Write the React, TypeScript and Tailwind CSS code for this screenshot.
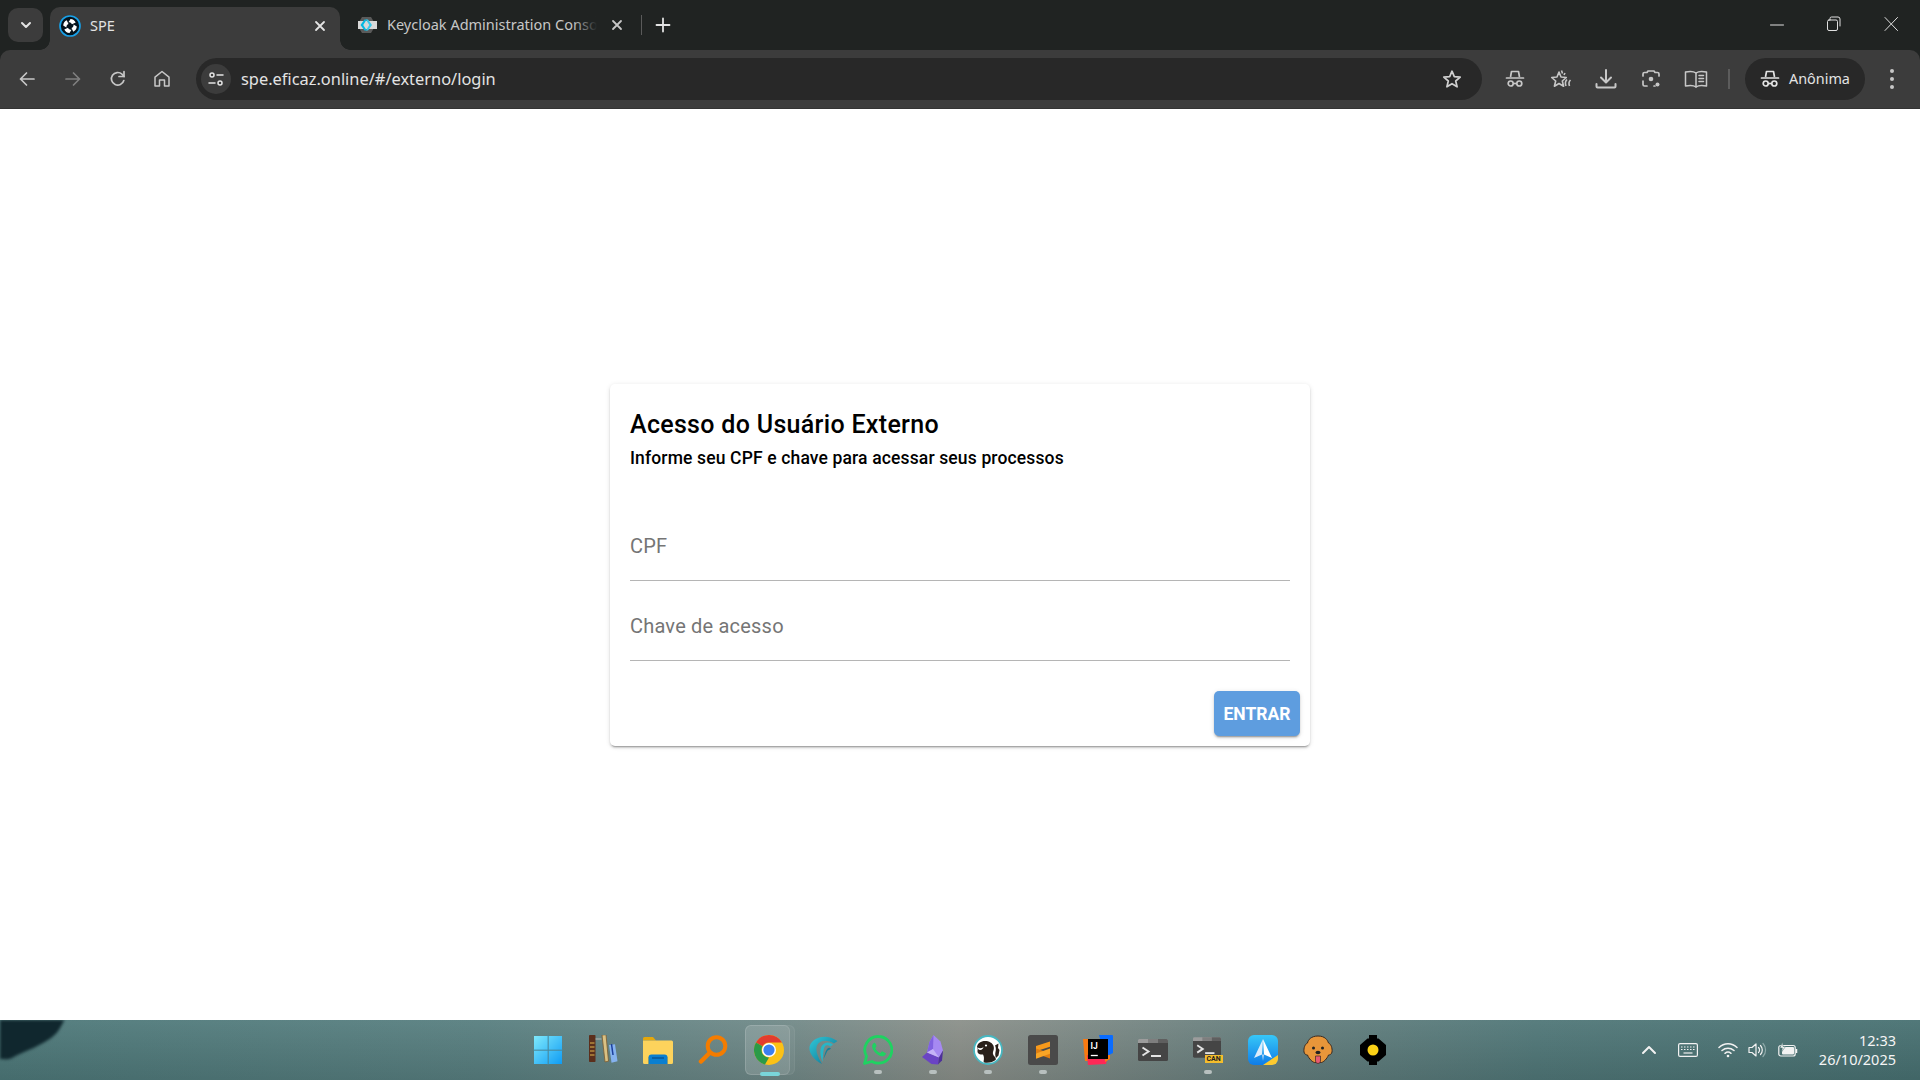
import React from "react";

const ui = { fontFamily: '"Noto Sans", "Open Sans", sans-serif' };
const rb = { fontFamily: 'Roboto, "Liberation Sans", sans-serif' };

function Line({ children, w = 20, h = 20, sw = 1.7, c = "#c7c7c7" }: { children: React.ReactNode; w?: number; h?: number; sw?: number; c?: string }) {
  return (
    <svg width={w} height={h} viewBox={`0 0 ${w} ${h}`} fill="none" stroke={c} strokeWidth={sw} strokeLinecap="round" strokeLinejoin="round">
      {children}
    </svg>
  );
}

function Spe() {
  return (
    <svg width="22" height="22" viewBox="0 0 22 22">
      <circle cx="11" cy="11" r="10" fill="#05131d" stroke="#18a0e8" strokeWidth="1.700" />
      <path d="M11.500 4c2.500.2 4.300 1.500 5.200 3.500l-3.700 1.800C12.300 7.800 11.300 7.200 9.500 7.200Z" fill="#fff" />
      <path d="M17.800 11.500c-.2 2.500-1.500 4.300-3.500 5.200L12.500 13c1.500-.7 2.100-1.700 2.100-3.500Z" fill="#fff" />
      <path d="M10.500 18c-2.500-.2-4.300-1.500-5.200-3.500L9 12.700c.7 1.500 1.700 2.100 3.500 2.100Z" fill="#fff" />
      <path d="M4.200 10.500c.2-2.500 1.500-4.300 3.500-5.200L9.500 9C8 9.700 7.400 10.700 7.400 12.500Z" fill="#fff" />
    </svg>
  );
}

function KeycloakFav() {
  return (
    <svg width="20" height="18" viewBox="0 0 20 18">
      <path d="M5 1h9l3 5H2Z" fill="#5a5a5a" />
      <path d="M2 12h15l-3 5H5Z" fill="#5a5a5a" />
      <rect x="1" y="5" width="19" height="8" fill="#d8d8d8" />
      <path d="M7.500 3.500 3.500 9l4 5.500h2.200L6.200 9l3.500-5.500Z" fill="#00b8e3" />
      <path d="M11 3.500 15 9l-4 5.500H8.800L12.300 9 8.800 3.500Z" fill="#39c8ea" />
    </svg>
  );
}

function Hat({ c = "#c7c7c7" }: { c?: string }) {
  return (
    <svg width="20" height="20" viewBox="0 0 20 20" fill="none" stroke={c} strokeWidth="1.700">
      <path d="M5.500 8 6.500 2.500h7L14.500 8" strokeLinejoin="round" />
      <path d="M1.500 9h17" strokeLinecap="round" />
      <circle cx="5.700" cy="14.500" r="2.500" />
      <circle cx="14.300" cy="14.500" r="2.500" />
      <path d="M8.200 14.500h3.600" />
    </svg>
  );
}

function Star({ size = 20 }: { size?: number }) {
  return (
    <svg width={size} height={size} viewBox="0 0 20 20" fill="none" stroke="#d0d0d0" strokeWidth="1.700" strokeLinejoin="round">
      <path d="M10 2.200 12.300 7.600 18.200 8.100 13.700 12 15.100 17.800 10 14.700 4.900 17.800 6.300 12 1.800 8.100 7.700 7.600Z" />
    </svg>
  );
}

function Chrome() {
  return (
    <svg width="30" height="30" viewBox="0 0 30 30">
      <circle cx="15" cy="15" r="15" fill="#fbc116" />
      <path d="M15 0A15 15 0 0 1 28 7.500H15A7.500 7.500 0 0 0 8.500 11.300L2 7.500A15 15 0 0 1 15 0Z" fill="#e33b2e" />
      <path d="M2 7.500 8.500 11.300A7.500 7.500 0 0 0 15 22.500L11 29.500A15 15 0 0 1 2 7.500Z" fill="#2b9a47" />
      <circle cx="15" cy="15" r="7" fill="#fff" />
      <circle cx="15" cy="15" r="5.600" fill="#3b7ff0" />
    </svg>
  );
}

function WinLogo() {
  return (
    <svg width="30" height="30" viewBox="0 0 30 30">
      <defs>
        <linearGradient id="wl" x1="0" y1="0" x2="1" y2="1">
          <stop offset="0" stopColor="#7fe9fb" />
          <stop offset="1" stopColor="#0f9cf4" />
        </linearGradient>
      </defs>
      <path d="M1 1h14v14H1zM15.500 1H29v14H15.500zM1 15.500h14V29H1zM15.500 15.500H29V29H15.500z" fill="url(#wl)" />
      <path d="M0 15h30M15 0v30" stroke="#3f8ea8" strokeWidth=".8" />
    </svg>
  );
}

function Books() {
  return (
    <svg width="30" height="30" viewBox="0 0 30 30">
      <rect x="1" y="0" width="6.500" height="27" rx=".8" fill="#5b2f1c" />
      <path d="M2 8h4.500M2 12h4.500M2 16h4.500M2 20h4.500" stroke="#b58a3c" strokeWidth="1.300" />
      <path d="M7.500 4h6" stroke="#b8b8b0" strokeWidth="1" />
      <path d="M14 0l4-.3 2.500 26.500-3.500.7Z" fill="#d9c184" stroke="#7a5b30" strokeWidth=".8" />
      <path d="M21 10l6-.8 2.500 17-6 1.500Z" fill="#85b2ef" />
      <path d="M23.500 9 25 20" stroke="#1c3f9c" strokeWidth="1.500" />
    </svg>
  );
}

function Folder() {
  return (
    <svg width="30" height="28" viewBox="0 0 30 28">
      <path d="M0 2.500A1.500 1.500 0 0 1 1.500 1h8.500l3 3.500H0Z" fill="#e3a70c" />
      <path d="M0 4.500h28.500A1.500 1.500 0 0 1 30 6v20.500A1.500 1.500 0 0 1 28.500 28h-27A1.500 1.500 0 0 1 0 26.500Z" fill="#fdd35c" />
      <path d="M5 21h20v7H5z" fill="#f7b92b" />
      <path d="M5.500 21.500A3 3 0 0 1 8.500 18.500h13a3 3 0 0 1 3 3V28h-19Z" fill="#0b7fd0" />
      <path d="M9 22h12" stroke="#0a4f8f" strokeWidth="1.300" />
    </svg>
  );
}

function Lens() {
  return (
    <svg width="30" height="30" viewBox="0 0 30 30" fill="none">
      <circle cx="18.500" cy="11" r="8.800" stroke="#f47c00" strokeWidth="4" />
      <path d="M11.500 18 3 26.500" stroke="#f47c00" strokeWidth="4.500" strokeLinecap="round" />
    </svg>
  );
}

function Edgeish() {
  return (
    <svg width="30" height="30" viewBox="0 0 30 30" fill="none" strokeLinecap="round">
      <defs>
        <linearGradient id="eg" x1="0" y1="0" x2="1" y2="1">
          <stop offset="0" stopColor="#30c8d8" />
          <stop offset="1" stopColor="#0e6f8e" />
        </linearGradient>
      </defs>
      <path d="M14 29C4 24 -1 15 2.500 9 7 1.500 19 -1.500 29.500 6L26 8.500C18 3.500 11 6 9 10.500 7 16 10 22 14 29Z" fill="url(#eg)" />
      <path d="M14.500 27C12 20 11.500 14 14 10.500 17 6.800 21.500 6.500 25 9.500L22.500 11.500C20 9.800 18 10 16.800 11.800 15.200 14.300 15.300 20 14.500 27Z" fill="#27b6c8" />
      <path d="M15.500 24C17 18 18 15 19.500 13.500 20.800 12.300 22 12.600 23 13.500L21 15C20 14.800 19.200 16 17.500 20Z" fill="#167f99" />
    </svg>
  );
}

function Whats() {
  return (
    <svg width="30" height="30" viewBox="0 0 30 30" fill="none">
      <path d="M15.500 1.500A13.300 13.300 0 0 1 15.500 28.200c-2.400 0-4.600-.6-6.600-1.700L1.500 28.500l2-7.200A13.300 13.300 0 0 1 15.500 1.500Z" stroke="#1fd261" strokeWidth="2.800" strokeLinejoin="round" />
      <path d="M10.800 8c-1.300 1-2 2.500-1.500 4.500 1 3.800 5 7.800 9 8.700 2 .4 3.500-.3 4.400-1.700.4-.7.300-1.300-.3-1.600l-2.700-1.300c-.6-.3-1-.2-1.400.3l-.9 1c-2.400-.8-4.300-2.600-5.200-5l.9-1c.4-.4.500-.9.300-1.300L12.300 8.200c-.3-.7-.9-.7-1.500-.2Z" fill="#1fd261" />
    </svg>
  );
}

function Obsidian() {
  return (
    <svg width="22" height="30" viewBox="0 0 22 30">
      <path d="M11.500 0 18.500 6.500 21 15.500 17 22.500 5 17.500 7.500 7Z" fill="#a689f2" />
      <path d="M11.500 0 7.500 7 5 17.500 11 14Z" fill="#8061e0" />
      <path d="M5 17.500 0 22l9.500 7 6.500.5 1-7Z" fill="#6a44c4" />
      <path d="M17 22.500 21 15.500 20 25.500 16 29.500Z" fill="#4e2f9c" />
      <path d="M11 14 5 17.500 17 22.500Z" fill="#c5b3f7" />
    </svg>
  );
}

function Beaver() {
  return (
    <svg width="30" height="30" viewBox="0 0 30 30">
      <circle cx="15" cy="15" r="14" fill="#fff" stroke="#47b7c1" strokeWidth="1.800" />
      <path d="M4 11.500C4.500 9 6.500 7.300 9 6.500c2.800-.8 6-.5 8.500 1 1.800 1 3 2.500 3.300 4.500.3 2-.3 3.500-.8 5-.4 1.500.2 3 1.500 4.500 1 1 1.500 2 1.300 3.300-2.500 2-6 3.300-10 3 -1-.1-1.800-.5-2.300-1.300.8-2.500.6-5-.5-7-2 .2-4-.2-5-1.500-.8-1-.5-2.500-.3-4-.2-.7-.4-1.300-.7-2.500Z" fill="#2a201b" />
      <path d="M4.500 12.500c2 1 4 .8 6-.3-.4 1.500-1.500 2.500-3.200 2.800-1.300.2-2.300-.8-2.800-2.500Z" fill="#fff" />
      <circle cx="13" cy="10.500" r="1.100" fill="#fff" />
      <path d="M22 10.500l3.500-2-.5 4.500 1.500 2-1 5.500-2.500 2.500c-.8-2-1-4-.5-6 .5-2 .6-4.500-.5-6.500Z" fill="#2a201b" />
    </svg>
  );
}

function Sublime() {
  return (
    <svg width="30" height="30" viewBox="0 0 30 30">
      <rect width="30" height="30" rx="2.500" fill="#4a4a4a" />
      <path d="M22 6.500 8 11v5.200L22 11.700Z" fill="#f79a1c" />
      <path d="M8 18.500 22 23.500v-5.200L8 13.500Z" fill="#e07f12" />
      <path d="M22 13.500 8 18.500v5.200l14-5Z" fill="#f9a526" />
    </svg>
  );
}

function Idea() {
  return (
    <svg width="30" height="30" viewBox="0 0 30 30">
      <path d="M0 4h10v22H2Z" fill="#f97a12" />
      <path d="M16 0h13a1 1 0 0 1 1 1v17l-8 4Z" fill="#0a6cff" />
      <path d="M4 20 24 25l-1 4L5 30Z" fill="#fe2857" />
      <path d="M22 20h5v4l-5 3Z" fill="#f97a12" />
      <rect x="5" y="4" width="20" height="20" fill="#000" />
      <path d="M7.800 20.500h7" stroke="#fff" strokeWidth="1.300" />
      <text x="7.500" y="14" fill="#fff" fontSize="8.500" fontFamily="Roboto, sans-serif" fontWeight="700">IJ</text>
    </svg>
  );
}

function Term({ w = 30, h = 22 }: { w?: number; h?: number }) {
  return (
    <svg width={w} height={h} viewBox="0 0 30 22">
      <path d="M1.500 0H28.500A1.500 1.500 0 0 1 30 1.500V4H0V1.500A1.500 1.500 0 0 1 1.500 0Z" fill="#9c9c9c" />
      <path d="M10 0h10v4H10z" fill="#7e7e7e" />
      <path d="M20 0h8.500A1.500 1.500 0 0 1 30 1.500V4H20Z" fill="#5f5f5f" />
      <path d="M0 4H30V20.500A1.500 1.500 0 0 1 28.500 22H1.500A1.500 1.500 0 0 1 0 20.500Z" fill="#454545" />
      <path d="M4.500 8.500 10.500 12.500 4.500 16.500" fill="none" stroke="#e3e3e3" strokeWidth="2" />
      <path d="M13 17h10" stroke="#e3e3e3" strokeWidth="2" />
    </svg>
  );
}

function Spark() {
  return (
    <svg width="30" height="30" viewBox="0 0 30 30">
      <defs>
        <linearGradient id="sp" x1="0" y1="0" x2="0" y2="1">
          <stop offset="0" stopColor="#37c7f7" />
          <stop offset="1" stopColor="#0f7ce8" />
        </linearGradient>
      </defs>
      <rect width="30" height="30" rx="6" fill="url(#sp)" />
      <path d="M30 20v4a6 6 0 0 1-6 6h-9Z" fill="#fdc92e" />
      <path d="M15 4 24 23 16 19.500Z" fill="#fff" />
      <path d="M15 4 6 23 14 19.500Z" fill="#dcecfb" />
      <path d="M14 19.500 15 26 16 19.500Z" fill="#b5d6f7" />
    </svg>
  );
}

function Dog() {
  return (
    <svg width="30" height="30" viewBox="0 0 30 30">
      <path d="M15 1C8 1 5 5 4.500 8 2 9 .5 13 1 17c.3 2 2 3 3.500 3 1.500 4 5 7 7 7.500h7c2-.5 5.500-3.500 7-7.500 1.500 0 3.200-1 3.500-3 .5-4-1-8-3.500-9C24.500 5 22 1 15 1Z" fill="#e8963a" stroke="#3a2a20" strokeWidth="1" />
      <circle cx="10.500" cy="13" r="1.500" fill="#222" />
      <circle cx="19.500" cy="13" r="1.500" fill="#222" />
      <ellipse cx="15" cy="17.500" rx="2.500" ry="1.800" fill="#222" />
      <path d="M12.500 21h5v5a2.500 2.500 0 0 1-5 0Z" fill="#e85a72" stroke="#3a2a20" strokeWidth=".7" />
    </svg>
  );
}

function Bolt() {
  return (
    <svg width="26" height="30" viewBox="0 0 26 30">
      <path d="M9 0h8v3.500h1.500L26 10v10l-7.500 6.500H17V30H9v-3.500H7.500L0 20V10l7.500-6.500H9Z" fill="#000" />
      <circle cx="13" cy="15" r="5.500" fill="#fcd116" />
    </svg>
  );
}

const dot = "bg-[#b8c0bf]";

const apps: { key: string; node: React.ReactNode; mark?: boolean }[] = [
  { key: "win", node: <WinLogo /> },
  { key: "books", node: <Books /> },
  { key: "folder", node: <Folder /> },
  { key: "search", node: <Lens /> },
  { key: "chrome", node: <Chrome /> },
  { key: "edge", node: <Edgeish /> },
  { key: "whats", node: <Whats />, mark: true },
  { key: "obs", node: <Obsidian />, mark: true },
  { key: "beaver", node: <Beaver />, mark: true },
  { key: "subl", node: <Sublime />, mark: true },
  { key: "idea", node: <Idea /> },
  { key: "term", node: <Term /> },
  {
    key: "can",
    node: (
      <div className="relative w-[30px] h-[26px]">
        <Term w={28} h={21} />
        <span className="absolute right-0 bottom-0 w-[18px] h-[8px] bg-[#f5bd2c] text-[7px] leading-[8px] text-center font-bold text-[#222]" style={rb}>CAN</span>
      </div>
    ),
    mark: true,
  },
  { key: "spark", node: <Spark /> },
  { key: "dog", node: <Dog /> },
  { key: "bolt", node: <Bolt /> },
];

export default function App() {
  return (
    <div className="w-[1920px] h-[1080px] flex flex-col bg-white overflow-hidden" style={ui}>
      {/* tab strip */}
      <div className="h-[50px] shrink-0 flex bg-[#202322] pl-2 text-[#e3e3e3]">
        <div className="mt-2 w-[35px] h-[34px] rounded-[10px] bg-[#3c3c3c] flex items-center justify-center">
          <Line w={12} h={12} sw={2} c="#e3e3e3"><path d="M2 4l4 4 4-4" /></Line>
        </div>
        <div className="relative mt-[7px] ml-[7px] w-[290px] h-[43px] rounded-t-[10px] bg-[#3c3c3c] flex items-center pl-[9px] pr-[14px] pb-[6px]">
          <span className="absolute -left-[10px] bottom-0 w-[10px] h-[10px] bg-[radial-gradient(circle_at_0_0,transparent_9.5px,#3c3c3c_10px)]" />
          <span className="absolute -right-[10px] bottom-0 w-[10px] h-[10px] bg-[radial-gradient(circle_at_100%_0,transparent_9.5px,#3c3c3c_10px)]" />
          <Spe />
          <span className="ml-[9px] text-[14.500px] flex-1">SPE</span>
          <Line w={12} h={12} sw={1.800} c="#e3e3e3"><path d="M2 2l8 8M10 2l-8 8" /></Line>
        </div>
        <div className="mt-[7px] h-[36px] w-[290px] flex items-center pl-[17px] pr-[7px]">
          <KeycloakFav />
          <span className="relative ml-[10px] w-[210px] overflow-hidden whitespace-nowrap text-[14.500px] text-[#c7c7c7]">
            Keycloak Administration Console
            <span className="absolute right-0 top-0 h-full w-[24px] bg-gradient-to-r from-transparent to-[#202322]" />
          </span>
          <span className="ml-auto"><Line w={12} h={12} sw={1.800} c="#c7c7c7"><path d="M2 2l8 8M10 2l-8 8" /></Line></span>
        </div>
        <div className="mt-[15px] ml-[11px] w-px h-[20px] bg-[#5a5a5a]" />
        <div className="mt-[17px] ml-[13px]">
          <Line w={16} h={16} sw={1.800} c="#e3e3e3"><path d="M8 1.500v13M1.500 8h13" /></Line>
        </div>
        <div className="ml-auto flex items-start pt-[15px]">
          <div className="w-[56px] flex justify-center pt-[1px]">
            <Line w={14} h={18} sw={1} c="#e0e0e0"><path d="M.5 9h13" /></Line>
          </div>
          <div className="w-[57px] flex justify-center">
            <Line w={16} h={18} sw={1} c="#e0e0e0">
              <path d="M4 5V3.500A1.500 1.500 0 0 1 5.500 2H12a2 2 0 0 1 2 2v7" />
              <rect x="1.500" y="5" width="10" height="10.500" rx="1.500" />
            </Line>
          </div>
          <div className="w-[58px] flex justify-center">
            <Line w={16} h={18} sw={1} c="#e0e0e0"><path d="M2 2.500l12.500 13M14.500 2.500 2 15.500" /></Line>
          </div>
        </div>
      </div>

      {/* toolbar */}
      <div className="h-[59px] shrink-0 bg-[#202322]">
        <div className="h-full rounded-t-[10px] bg-[#3c3c3c] border-b border-[#333333] flex items-center text-[#c7c7c7]">
          <div className="w-[196px] shrink-0 flex items-center pl-[17px]">
            <div className="w-[46px]">
              <Line w={20} h={20} sw={1.700} c="#c7c7c7"><path d="M17 10H3.500M9.500 4l-6 6 6 6" /></Line>
            </div>
            <div className="w-[45px]">
              <Line w={20} h={20} sw={1.700} c="#7f7f7f"><path d="M3 10h13.500M10.500 4l6 6-6 6" /></Line>
            </div>
            <div className="w-[44px]">
              <Line w={20} h={20} sw={1.700} c="#c7c7c7">
                <path d="M15.800 11.500A6.300 6.300 0 1 1 14 5.200L16 7.500" />
                <path d="M16 2.500v5h-5" />
              </Line>
            </div>
            <div>
              <Line w={20} h={20} sw={1.500} c="#c7c7c7">
                <path d="M3 17V8.200L10 2.500l7 5.700V17h-4.500v-6h-5v6Z" />
              </Line>
            </div>
          </div>
          <div className="w-[1286px] h-[42px] rounded-full bg-[#282828] flex items-center pl-[5px] pr-[20px]">
            <div className="w-[30px] h-[30px] rounded-full bg-[#3c3c3c] flex items-center justify-center">
              <Line w={16} h={16} sw={1.500} c="#e3e3e3">
                <circle cx="4" cy="4" r="2" />
                <path d="M9 4h6M1 12h6" />
                <circle cx="12" cy="12" r="2" />
              </Line>
            </div>
            <span className="ml-[10px] text-[16.400px] text-[#e3e3e3]">spe.eficaz.online/#/externo/login</span>
            <span className="ml-auto"><Star /></span>
          </div>
          <div className="flex items-center ml-[23px]">
            <div className="w-[45px]"><Hat /></div>
            <div className="w-[45px]">
              <svg width="22" height="20" viewBox="0 0 22 20" fill="none" stroke="#c7c7c7" strokeWidth="1.600" strokeLinejoin="round">
                <path d="M9 3l2 5 5.300.5-4 3.500 1.300 5.200L9 14.500l-4.600 2.700L5.700 12l-4-3.500L7 8Z" />
                <path d="M11.500 1.500l1 3M15 4l-1 2M17 10.500c-1.500 1.500-2 4-1 6.500M20.500 11c-1.500 1.500-2 3.500-1 6" />
              </svg>
            </div>
            <div className="w-[46px]">
              <Line w={22} h={22} sw={2} c="#c7c7c7">
                <path d="M11 2v12M6 9.500l5 5 5-5" />
                <path d="M1.500 16v2.500a1 1 0 0 0 1 1h17a1 1 0 0 0 1-1V16" />
              </Line>
            </div>
            <div className="w-[43px]">
              <Line w={20} h={20} sw={1.700} c="#c7c7c7">
                <path d="M2 7V5a1.500 1.500 0 0 1 1.500-1.500H6L7 2h6l1 1.500h2.500A1.500 1.500 0 0 1 18 5v2M2 12v3.500A1.500 1.500 0 0 0 3.500 17H6M14 17h-1" />
                <circle cx="10" cy="10" r="2.300" fill="#c7c7c7" stroke="none" />
                <circle cx="16.500" cy="15.500" r="2" fill="#c7c7c7" stroke="none" />
              </Line>
            </div>
            <div>
              <Line w={24} h={20} sw={1.500} c="#c7c7c7">
                <path d="M12 4C10 2.500 6 2 1.500 3v14C6 16 10 16.500 12 18c2-1.500 6-2 10.500-1V3C18 2 14 2.500 12 4Z" />
                <path d="M12 4v14M15 6.500h4.500M15 9.500h4.500M15 12.500h4.500" />
              </Line>
            </div>
          </div>
          <div className="ml-[20px] w-[2px] h-[20px] bg-[#5c5c5c]" />
          <div className="ml-[15px] w-[120px] h-[42px] rounded-full bg-[#282828] flex items-center pl-[15px]">
            <Hat c="#e3e3e3" />
            <span className="ml-[9px] text-[14.400px] text-[#e3e3e3]">Anônima</span>
          </div>
          <div className="ml-[25px] flex flex-col gap-[4px]">
            <span className="w-[4px] h-[4px] rounded-full bg-[#c7c7c7]" />
            <span className="w-[4px] h-[4px] rounded-full bg-[#c7c7c7]" />
            <span className="w-[4px] h-[4px] rounded-full bg-[#c7c7c7]" />
          </div>
        </div>
      </div>

      {/* page */}
      <main className="flex-1 flex items-start justify-center pt-[275px]" style={rb}>
        <div className="w-[700px] h-[362px] rounded-[5px] bg-white pt-[21px] px-[20px] shadow-[0_3px_1px_-2px_rgba(0,0,0,0.2),0_2px_2px_0_rgba(0,0,0,0.14),0_1px_5px_0_rgba(0,0,0,0.12)]">
          <h1 className="h-[40px] leading-[40px] text-[25px] font-medium tracking-[0.31px] text-black">Acesso do Usuário Externo</h1>
          <p className="h-[27px] leading-[27px] text-[17.500px] font-medium tracking-[0.14px] text-black">Informe seu CPF e chave para acessar seus processos</p>
          <div className="mt-[54px] h-[55px] pb-[14px] border-b border-[#b5b5b5] text-[20px] tracking-[0.2px] leading-[40px] text-[#757575]">CPF</div>
          <div className="mt-[25px] h-[55px] pb-[14px] border-b border-[#b5b5b5] text-[20px] tracking-[0.2px] leading-[40px] text-[#757575]">Chave de acesso</div>
          <div className="mt-[30px] flex justify-end -mr-[10px]">
            <button className="w-[86px] h-[45px] pt-[1px] rounded-[5px] bg-[#5e9ddf] text-white text-[17.500px] font-bold shadow-[0_3px_1px_-2px_rgba(0,0,0,0.2),0_2px_2px_0_rgba(0,0,0,0.14),0_1px_5px_0_rgba(0,0,0,0.12)]">ENTRAR</button>
          </div>
        </div>
      </main>

      {/* taskbar */}
      <footer className="relative h-[60px] shrink-0 grid grid-cols-[1fr_auto_1fr] items-center bg-[linear-gradient(180deg,rgba(255,255,255,0.05),rgba(0,0,0,0.1)),linear-gradient(90deg,#4d7879_0%,#587f80_25%,#6f8988_40%,#8b908a_50%,#677f7e_65%,#507778_80%,#487172_100%)] text-white">
        <div className="relative h-full overflow-hidden">
          <svg className="absolute left-0 top-0 blur-[1.5px]" width="70" height="40" viewBox="0 0 70 40">
            <path d="M-3-3H66C60 8 58 14 48 20 36 28 22 32 12 38 8 40 3 39-3 39Z" fill="#10272e" />
          </svg>
        </div>
        <div className="flex">
          {apps.map((a) => (
            <div key={a.key} className="relative w-[55px] h-[60px] flex items-center justify-center">
              {a.key === "chrome" && (
                <>
                  <span className="absolute left-[4.500px] top-[5px] w-[50px] h-[50px] rounded-[6px] bg-white/5 border border-white/5" />
                  <span className="absolute left-[4.500px] top-[5px] w-[45px] h-[50px] rounded-[6px] bg-white/10 border border-white/10" />
                  <span className="absolute left-[19.500px] top-[52px] w-[20px] h-[4px] rounded-full bg-[#79d5d9]" />
                </>
              )}
              <span className={a.key === "chrome" ? "relative flex items-center justify-center ml-[3px]" : "relative flex items-center justify-center"}>{a.node}</span>
              {a.mark && <span className={`absolute left-[23.500px] top-[50px] w-[8px] h-[4px] rounded-full ${dot}`} />}
            </div>
          ))}
        </div>
        <div className="flex items-center justify-end pr-[24px]">
          <Line w={16} h={12} sw={2} c="#f2f2f2"><path d="M2 9l6-6 6 6" /></Line>
          <span className="ml-[21px]">
            <svg width="20" height="14" viewBox="0 0 20 14" fill="none" stroke="#f2f2f2" strokeWidth="1.200">
              <rect x=".6" y=".6" width="18.800" height="12.800" rx="1.500" />
              <path d="M3 4h14M3 6.500h14" strokeDasharray="1.500 1.500" />
              <path d="M5.500 10h9" />
            </svg>
          </span>
          <span className="ml-[20px]">
            <svg width="20" height="16" viewBox="0 0 20 16" fill="none" stroke="#f2f2f2" strokeWidth="1.500" strokeLinecap="round">
              <path d="M1 5.500c5-5 13-5 18 0M4 8.500c3.500-3 8.500-3 12 0M7 11.300c1.700-1.400 4.300-1.400 6 0" />
              <circle cx="10" cy="14" r="1.300" fill="#f2f2f2" stroke="none" />
            </svg>
          </span>
          <span className="ml-[10px]">
            <svg width="20" height="16" viewBox="0 0 20 16" fill="none" stroke="#f2f2f2" strokeWidth="1.200" strokeLinejoin="round">
              <path d="M1 5.500h3L8 2v12l-4-3.500H1Z" />
              <path d="M10.500 5.500a3.500 3.500 0 0 1 0 5M12.500 3.500a6.500 6.500 0 0 1 0 9" strokeLinecap="round" />
              <path d="M15 1.500a9.500 9.500 0 0 1 0 13" stroke="#8fa9a9" strokeLinecap="round" />
            </svg>
          </span>
          <span className="ml-[10px]">
            <svg width="20" height="16" viewBox="0 0 20 16" fill="none" stroke="#f2f2f2" strokeWidth="1.200">
              <rect x=".8" y="3.500" width="16.400" height="10.500" rx="2" />
              <path d="M18.500 7v4" strokeWidth="1.500" />
              <rect x="4" y="5" width="12" height="7.500" rx="1" fill="#f2f2f2" stroke="none" />
              <path d="M4.500 0 2 6h2.500L3.500 10l4-5.500H5Z" fill="#f2f2f2" stroke="#48706f" strokeWidth=".5" />
            </svg>
          </span>
          <div className="ml-[21px] text-right text-[14.500px] leading-[19px] text-[#f5f5f5]">
            <div>12:33</div>
            <div>26/10/2025</div>
          </div>
        </div>
      </footer>
    </div>
  );
}
